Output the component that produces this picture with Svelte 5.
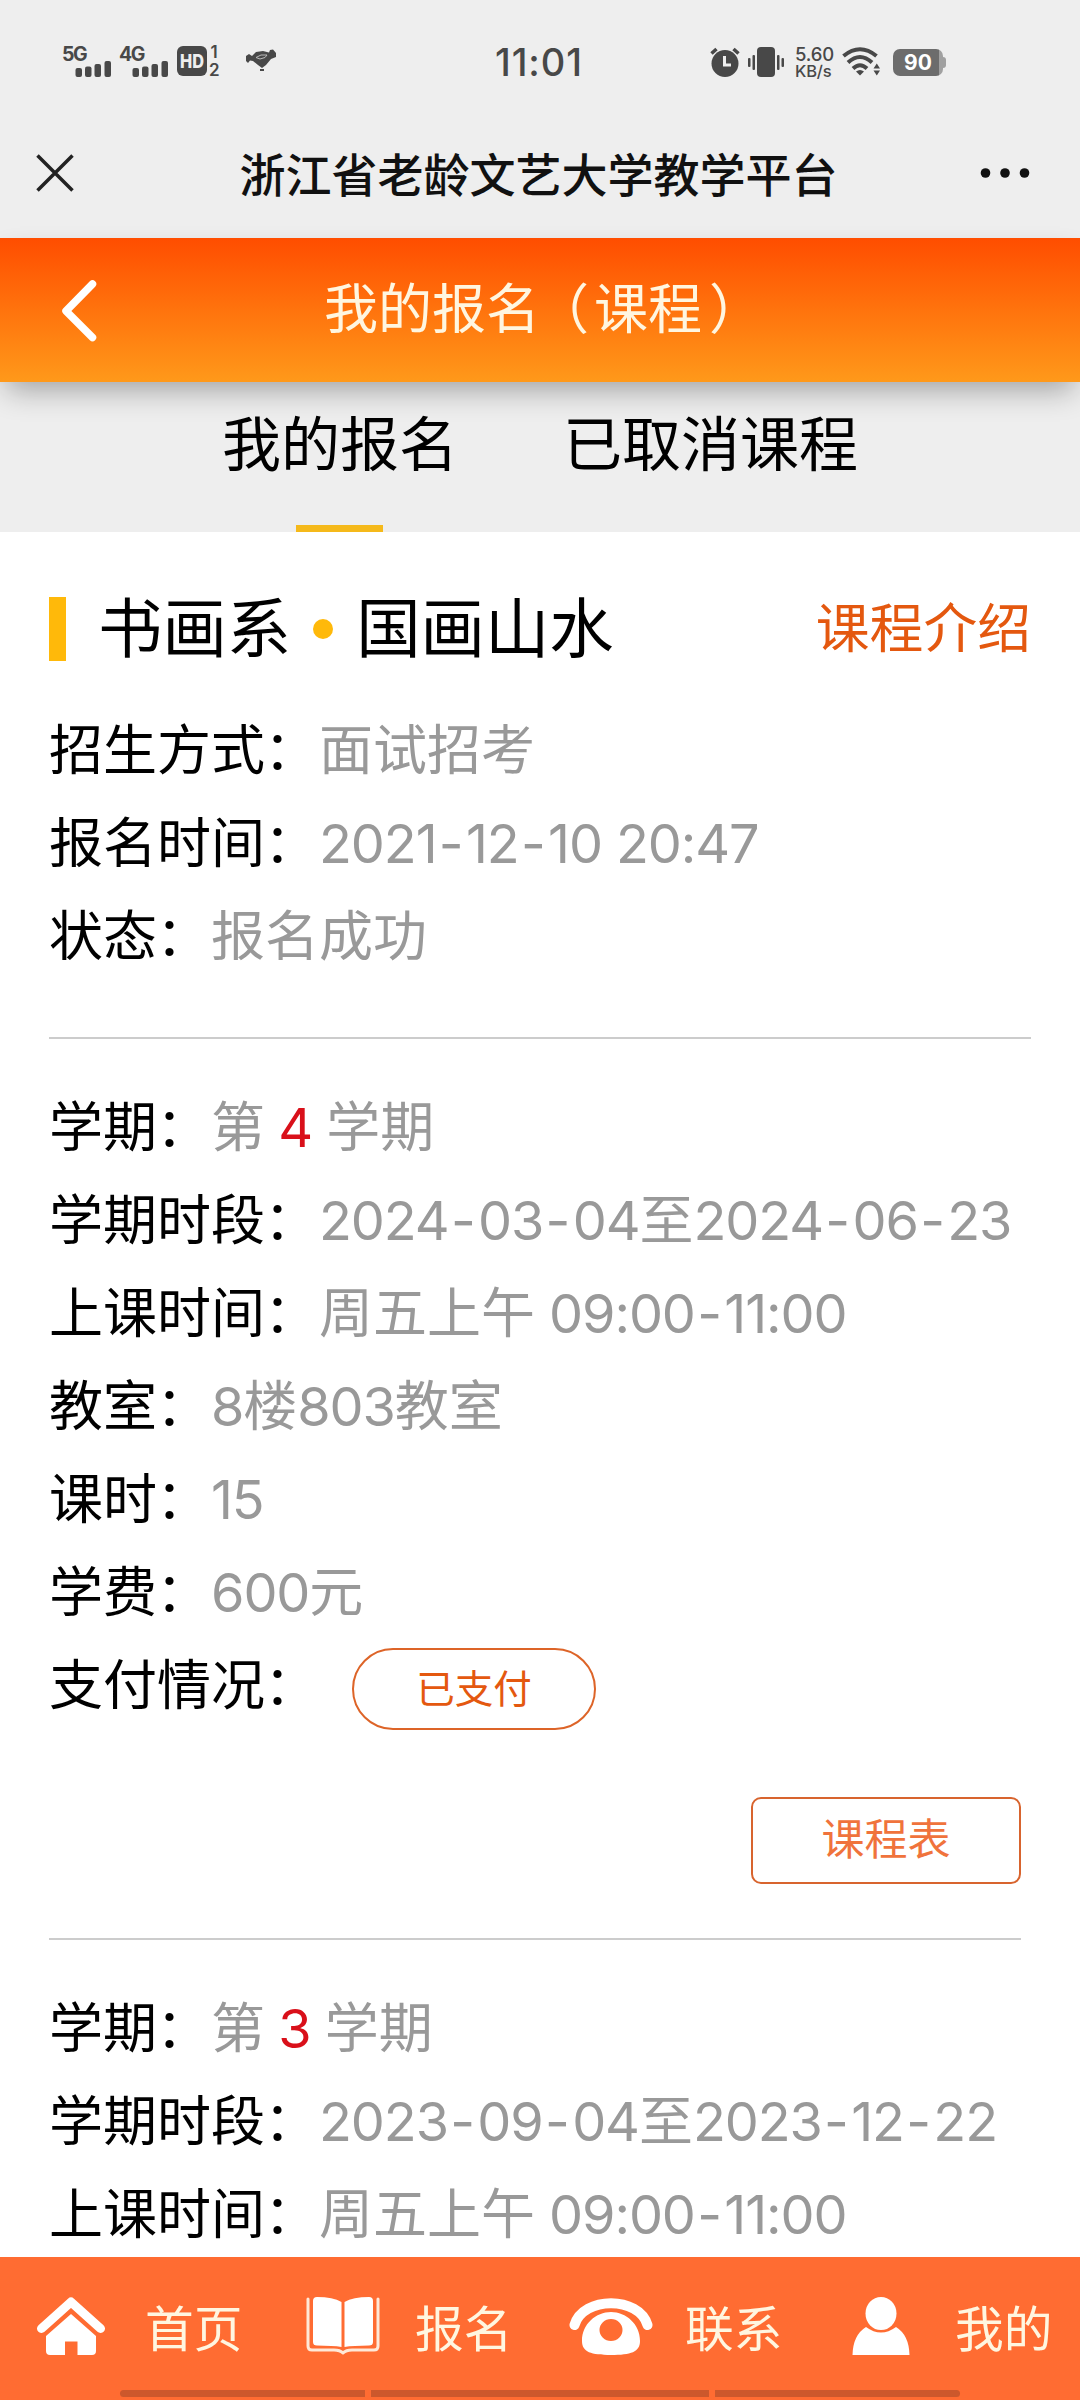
<script>
    const tabs = ["我的报名", "已取消课程"]
    let activeTab = 0

    const course = {
        department: "书画系",
        name: "国画山水",
        info: [
            { label: "招生方式", value: "面试招考" },
            { label: "报名时间", value: "2021-12-10 20:47" },
            { label: "状态", value: "报名成功" }
        ]
    }

    const terms = [
        {
            no: 4,
            rows: [
                { label: "学期时段", value: "2024-03-04至2024-06-23" },
                { label: "上课时间", value: "周五上午 09:00-11:00" },
                { label: "教室", value: "8楼803教室" },
                { label: "课时", value: "15" },
                { label: "学费", value: "600元" }
            ],
            paid: "已支付"
        },
        {
            no: 3,
            rows: [
                { label: "学期时段", value: "2023-09-04至2023-12-22" },
                { label: "上课时间", value: "周五上午 09:00-11:00" }
            ]
        }
    ]

    const menu = [
        { icon: "home", label: "首页" },
        { icon: "book", label: "报名" },
        { icon: "phone", label: "联系" },
        { icon: "user", label: "我的" }
    ]

    // Split a value so that digits and dashes get their own spacing //
    function getParts(value) {
        return value.split(/([\d: ]+|-)/).filter(p => p !== "").map(p => ({
            text: p,
            type: p === "-" ? "dash" : /\d/.test(p) ? "digits" : "han"
        }))
    }
</script>

<div class="screen" lang="zh-CN">

    <!-- STATUS BAR -->
    <div class="status">
        <div class="status-left">
            {#each ["5G", "4G"] as net}
                <svg class="signal" width="49" height="36" viewBox="-1 -2 49 36">
                    <text x="-1" y="16.5" class="net">{net}</text>
                    <rect x="12.500" y="24" width="6.500" height="9" rx="2"/>
                    <rect x="22" y="22.500" width="6.500" height="10.500" rx="2"/>
                    <rect x="31.500" y="20" width="6.500" height="13" rx="2"/>
                    <rect x="41.500" y="17" width="6.500" height="16" rx="2"/>
                </svg>
            {/each}
            <svg class="hd" width="46" height="38" viewBox="0 0 46 38">
                <rect x="0" y="5" width="30" height="30" rx="6"/>
                <text x="3" y="26.500" class="hd-text" textLength="24" lengthAdjust="spacingAndGlyphs">HD</text>
                <text x="33.500" y="17" class="sim">1</text>
                <text x="32" y="34.500" class="sim">2</text>
            </svg>
            <svg class="bird" width="32" height="24" viewBox="0 0 32 24">
                <path d="M1 8 L4 6 L7 8 L11 4 L18 3 L24 4.500 L25 2 L28 1.500 L31 5 V9 L26 11 L21 17 L17 20 L13 17 L8 13 L5 12.500 L3 15 L1 13 Z"/>
                <path class="bird-line" d="M11 9.500 L16 7 L22 7 L20 9.500 L15 11 Z"/>
                <rect x="15" y="21" width="4" height="2"/>
            </svg>
        </div>
        <div class="clock">11:01</div>
        <div class="status-right">
            <svg class="alarm" width="30" height="30" viewBox="0 0 30 30">
                <circle cx="15" cy="16.500" r="13.500"/>
                <path class="dark" d="M1.500 6.500 L6.500 2 M23.500 2 L28.500 6.500"/>
                <path class="light" d="M14.500 9 V18 H21"/>
            </svg>
            <svg class="vibrate" width="36" height="30" viewBox="0 0 36 30">
                <rect x="9" y="0" width="18" height="30" rx="4"/>
                <rect x="4.500" y="8" width="2.500" height="15" rx="1"/>
                <rect x="0" y="11" width="2.500" height="9" rx="1"/>
                <rect x="29" y="8" width="2.500" height="15" rx="1"/>
                <rect x="33.500" y="11" width="2.500" height="9" rx="1"/>
            </svg>
            <div class="speed">
                <span>5.60</span>
                <span class="unit">KB/s</span>
            </div>
            <svg class="wifi" width="40" height="30" viewBox="0 0 40 30">
                <path class="arc" d="M1.500 9 Q18 -4.500 34.500 9"/>
                <path class="arc" d="M6 15.500 Q18 4.500 30 15.500"/>
                <path class="arc" d="M11 21.500 Q18 15 25 21.500"/>
                <path d="M14 24.500 Q18 21.500 22 24.500 L18 28.500 Z"/>
                <path d="M31.500 21.500 L34.800 16.500 L38 21.500 Z M31.500 23.500 L34.800 28.500 L38 23.500 Z"/>
            </svg>
            <div class="battery"><span>90</span></div>
        </div>
    </div>

    <!-- WEBVIEW TITLE -->
    <div class="titlebar">
        <svg width="38" height="38" viewBox="0 0 38 38">
            <path class="close" d="M1.500 1.500 L36.500 36.500 M36.500 1.500 L1.500 36.500"/>
        </svg>
        <h1>浙江省老龄文艺大学教学平台</h1>
        <svg width="50" height="12" viewBox="0 0 50 12">
            <circle cx="5.500" cy="6" r="4.800"/>
            <circle cx="25" cy="6" r="4.800"/>
            <circle cx="44.500" cy="6" r="4.800"/>
        </svg>
    </div>

    <!-- PAGE HEADER -->
    <header class="header">
        <svg class="back" width="36" height="62" viewBox="0 0 36 62">
            <path d="M31.500 4 L5 31 L31.500 57.500"/>
        </svg>
        <h2>我的报名<span class="open">（</span>课程<span class="shut">）</span></h2>
    </header>

    <!-- TABS -->
    <div class="tabs">
        {#each tabs as tab, i}
            <button class="tab" class:active={i === activeTab} on:click={() => activeTab = i}>{tab}</button>
        {/each}
    </div>

    <!-- COURSE -->
    <main class="content">
        <div class="course-head">
            <span class="mark"></span>
            <span>{course.department}</span>
            <span class="dot"></span>
            <span>{course.name}</span>
            <span class="intro">课程介绍</span>
        </div>

        {#each course.info as row}
            <div class="row">
                <span class="label">{row.label}<span class="colon">：</span></span>
                <span class="value">{#each getParts(row.value) as part}<span class={part.type}>{part.text}</span>{/each}</span>
            </div>
        {/each}

        <div class="line"></div>

        {#each terms as term}
            <section class="term">
                <div class="row">
                    <span class="label">学期<span class="colon">：</span></span>
                    <span class="value term-no">第 <b>{term.no}</b> 学期</span>
                </div>
                {#each term.rows as row}
                    <div class="row">
                        <span class="label">{row.label}<span class="colon">：</span></span>
                        <span class="value">{#each getParts(row.value) as part}<span class={part.type}>{part.text}</span>{/each}</span>
                    </div>
                {/each}
                {#if term.paid}
                    <div class="row">
                        <span class="label">支付情况<span class="colon">：</span></span>
                        <span class="pill">{term.paid}</span>
                    </div>
                    <div class="actions">
                        <button class="schedule">课程表</button>
                    </div>
                    <div class="line short"></div>
                {/if}
            </section>
        {/each}
    </main>

    <!-- BOTTOM MENU -->
    <footer>
        <nav>
            {#each menu as item}
                <div class="menu-item">
                    <div class="menu-icon">
                        {#if item.icon === "home"}
                            <svg width="68" height="58" viewBox="0 0 68 58">
                                <path class="roof" d="M4.500 31.500 L34 5 L63.500 31.500"/>
                                <path d="M34 17 L59 39 V54 Q59 58 55 58 H40.500 V44.500 H28 V58 H13 Q9 58 9 54 V39 Z"/>
                            </svg>
                        {:else if item.icon === "book"}
                            <svg class="book" width="74" height="58" viewBox="0 0 74 58">
                                <path d="M35.500 5 Q27 0 11 0 Q7 0 7 4 V45 Q7 48.500 11 48.500 Q27 48.500 35.500 50 Z"/>
                                <path d="M38.500 5 Q47 0 63 0 Q67 0 67 4 V45 Q67 48.500 63 48.500 Q47 48.500 38.500 50 Z"/>
                                <path class="cover" d="M2 2 V49 Q2 53 6 53 H28 Q34 53 37 56 Q40 53 46 53 H68 Q72 53 72 49 V2"/>
                            </svg>
                        {:else if item.icon === "phone"}
                            <svg width="84" height="58" viewBox="0 0 84 58">
                                <path class="handset" d="M5.500 28 C14 -1 70 -1 78.500 28"/>
                                <path fill-rule="evenodd" d="M42 15 C57 15 71 27 71 44 C71 55 62 58 42 58 C22 58 13 55 13 44 C13 27 27 15 42 15 Z M42 22 A11.500 11 0 1 0 42 44 A11.500 11 0 1 0 42 22 Z"/>
                            </svg>
                        {:else}
                            <svg width="58" height="58" viewBox="0 0 58 58">
                                <ellipse cx="29" cy="16.500" rx="15.500" ry="16.500"/>
                                <path d="M14 30 Q29 41 44 30 Q57 38 57.500 58 H0.500 Q1 38 14 30 Z"/>
                            </svg>
                        {/if}
                    </div>
                    <span>{item.label}</span>
                </div>
            {/each}
        </nav>
        <div class="gesture"><i class="side-l"></i><i class="middle"></i><i class="side-r"></i></div>
    </footer>
</div>

<style>
    :global(body) {
        margin: 0;
        background: #fff;
    }

    .screen {
        width: 1080px;
        height: 2400px;
        display: flex;
        flex-direction: column;
        overflow: hidden;
        background: #fff;
        color: #000;
        font-family: Inter, "Noto Sans CJK SC", sans-serif;
    }

    svg {
        display: block;
        flex: none;
    }

    button {
        font-family: inherit;
        background: none;
        border: 0;
        padding: 0;
        color: inherit;
    }

    h1, h2 {
        margin: 0;
        flex: 1;
        text-align: center;
    }

    /* status bar */
    .status {
        height: 124px;
        flex: none;
        display: grid;
        grid-template-columns: 433px 1fr 237px;
        align-items: center;
        background: #eee;
        color: #484848;
        fill: #484848;
        padding: 0 133px 0 62px;
        box-sizing: border-box;
    }

    .status-left, .status-right {
        display: flex;
        align-items: center;
    }

    .status-left {
        padding-bottom: 4px;
    }

    .signal {
        margin-right: 8px;
    }

    .net {
        font-size: 19.5px;
        font-weight: 700;
        letter-spacing: -1.5px;
    }

    .hd {
        margin-left: 1px;
    }

    .hd-text {
        font-size: 19px;
        font-weight: 800;
        fill: #eee;
    }

    .sim {
        font-size: 17px;
        font-weight: 600;
    }

    .bird {
        margin-left: 22px;
    }

    .bird-line {
        fill: none;
        stroke: #bbb;
        stroke-width: 1;
    }

    .clock {
        font-size: 38px;
        font-weight: 450;
        line-height: 40px;
        letter-spacing: 0.9px;
    }

    .dark {
        stroke: #484848;
        stroke-width: 3.5;
    }

    .light {
        fill: none;
        stroke: #eee;
        stroke-width: 3;
    }

    .vibrate {
        margin-left: 8px;
    }

    .speed {
        width: 38px;
        margin-left: 11px;
        display: flex;
        flex-direction: column;
        font-size: 18.5px;
        line-height: 17px;
        font-weight: 500;
        letter-spacing: -0.2px;
    }

    .unit {
        font-size: 16.5px;
        line-height: 16px;
    }

    .wifi {
        margin-left: 9px;
    }

    .arc {
        fill: none;
        stroke: #484848;
        stroke-width: 4;
    }

    .battery {
        position: relative;
        width: 50px;
        height: 27px;
        margin-left: 11px;
        border-radius: 7px;
        background: linear-gradient(90deg, #6c6c6c 46px, #a0a0a0 46px);
        color: #fff;
        font-size: 21px;
        line-height: 27px;
        font-weight: 700;
        text-align: center;
    }

    .battery::after {
        content: '';
        position: absolute;
        right: -3px;
        top: 8px;
        width: 3px;
        height: 11px;
        border-radius: 0 3px 3px 0;
        background: #a0a0a0;
    }

    /* webview title */
    .titlebar {
        height: 114px;
        flex: none;
        display: flex;
        align-items: center;
        padding: 0 50px 16px 36px;
        box-sizing: border-box;
        background: #eee;
        color: #111;
        fill: #111;
    }

    .titlebar h1 {
        padding: 3px 0 0 23px;
        font-size: 46px;
        line-height: 60px;
        font-weight: 500;
    }

    .close {
        stroke: #222;
        stroke-width: 3.5;
    }

    /* orange header */
    .header {
        height: 144px;
        flex: none;
        display: flex;
        align-items: center;
        padding: 0 97px 0 61px;
        box-sizing: border-box;
        position: relative;
        background: linear-gradient(#ff4d00, #ff991a);
        box-shadow: 0 14px 28px -6px rgba(0, 0, 0, 0.32);
        color: #fff6e0;
    }

    .header h2 {
        font-size: 54px;
        line-height: 70px;
        font-weight: 400;
    }

    .open {
        margin: 0 5px 0 -5px;
    }

    .shut {
        margin: 0 -7px 0 7px;
    }

    .back {
        margin-top: 2px;
        fill: none;
        stroke: #fff;
        stroke-width: 7.5;
        stroke-linecap: round;
        stroke-linejoin: round;
    }

    /* tabs */
    .tabs {
        height: 150px;
        flex: none;
        display: flex;
        justify-content: center;
        gap: 105px;
        background: #eee;
    }

    .tab {
        display: flex;
        flex-direction: column;
        align-items: center;
        justify-content: space-between;
        padding-top: 23px;
        font-size: 59px;
        line-height: 80px;
    }

    .tab.active::after {
        content: '';
        width: 87px;
        height: 7px;
        background: #f5b91a;
    }

    /* course */
    .content {
        flex: 1;
        min-height: 0;
        overflow: hidden;
        padding: 48px 49px 0;
    }

    .course-head {
        display: flex;
        align-items: center;
        height: 98px;
        margin-bottom: 25px;
        font-size: 64.4px;
        line-height: 90px;
    }

    .mark {
        width: 17px;
        height: 64px;
        margin-right: 32px;
        background: #ffb90a;
    }

    .dot {
        width: 20px;
        height: 20px;
        margin: 0 23px 0 22px;
        border-radius: 50%;
        background: #ffb90a;
    }

    .intro {
        margin-left: auto;
        font-size: 53.8px;
        color: #e4580f;
    }

    .row {
        display: flex;
        align-items: center;
        height: 93px;
        padding-top: 2px;
        box-sizing: border-box;
        font-size: 54px;
        line-height: 80px;
    }

    .label, .value {
        white-space: pre;
    }

    .colon {
        margin: 0 1px 0 -1px;
    }

    .value {
        color: #999;
    }

    .value b {
        font-weight: 400;
        color: #d9101a;
    }

    .term-no {
        word-spacing: -2px;
    }

    .digits {
        letter-spacing: -1.1px;
    }

    .dash {
        margin: 0 2.3px;
    }

    .line {
        height: 2px;
        margin: 55px 0 41px;
        background: #ccc;
    }

    .line.short {
        margin: 54px 10px 41px 0;
    }

    .pill {
        width: 244px;
        height: 82px;
        margin: 7px 0 0 33px;
        box-sizing: border-box;
        border: 2px solid #dd6428;
        border-radius: 41px;
        color: #e4580f;
        font-size: 38.5px;
        line-height: 78px;
        text-align: center;
    }

    .actions {
        display: flex;
        justify-content: flex-end;
        padding: 66px 10px 0 0;
    }

    .schedule {
        width: 270px;
        height: 87px;
        box-sizing: border-box;
        border: 2px solid #d8642e;
        border-radius: 10px;
        color: #f0733c;
        font-size: 43px;
        line-height: 78px;
        padding-bottom: 3px;
    }

    /* bottom menu */
    footer {
        height: 143px;
        flex: none;
        display: flex;
        flex-direction: column;
        background: #ff6c32;
        color: #fff6e0;
    }

    nav {
        height: 133px;
        display: grid;
        grid-template-columns: repeat(4, 270px);
    }

    .menu-item {
        display: flex;
        align-items: center;
        font-size: 48.7px;
        line-height: 60px;
        padding-top: 12px;
    }

    .menu-icon {
        width: 142px;
        margin: 0 3px 8px 0;
        display: flex;
        justify-content: center;
        fill: #fff;
    }

    .book {
        margin-left: 4px;
    }

    .roof, .handset, .cover {
        fill: none;
        stroke: #fff;
        stroke-width: 9;
        stroke-linecap: round;
        stroke-linejoin: round;
    }

    .cover {
        stroke: #ffe9d8;
        stroke-width: 3;
    }

    .handset {
        stroke-width: 10;
    }

    .gesture {
        display: flex;
        justify-content: center;
        gap: 6px;
    }

    .gesture i {
        width: 245px;
        height: 7px;
        background: #cc582c;
    }

    .gesture .middle {
        width: 338px;
    }

    .gesture .side-l {
        border-radius: 4px 0 0 4px;
    }

    .gesture .side-r {
        border-radius: 0 4px 4px 0;
    }
</style>
